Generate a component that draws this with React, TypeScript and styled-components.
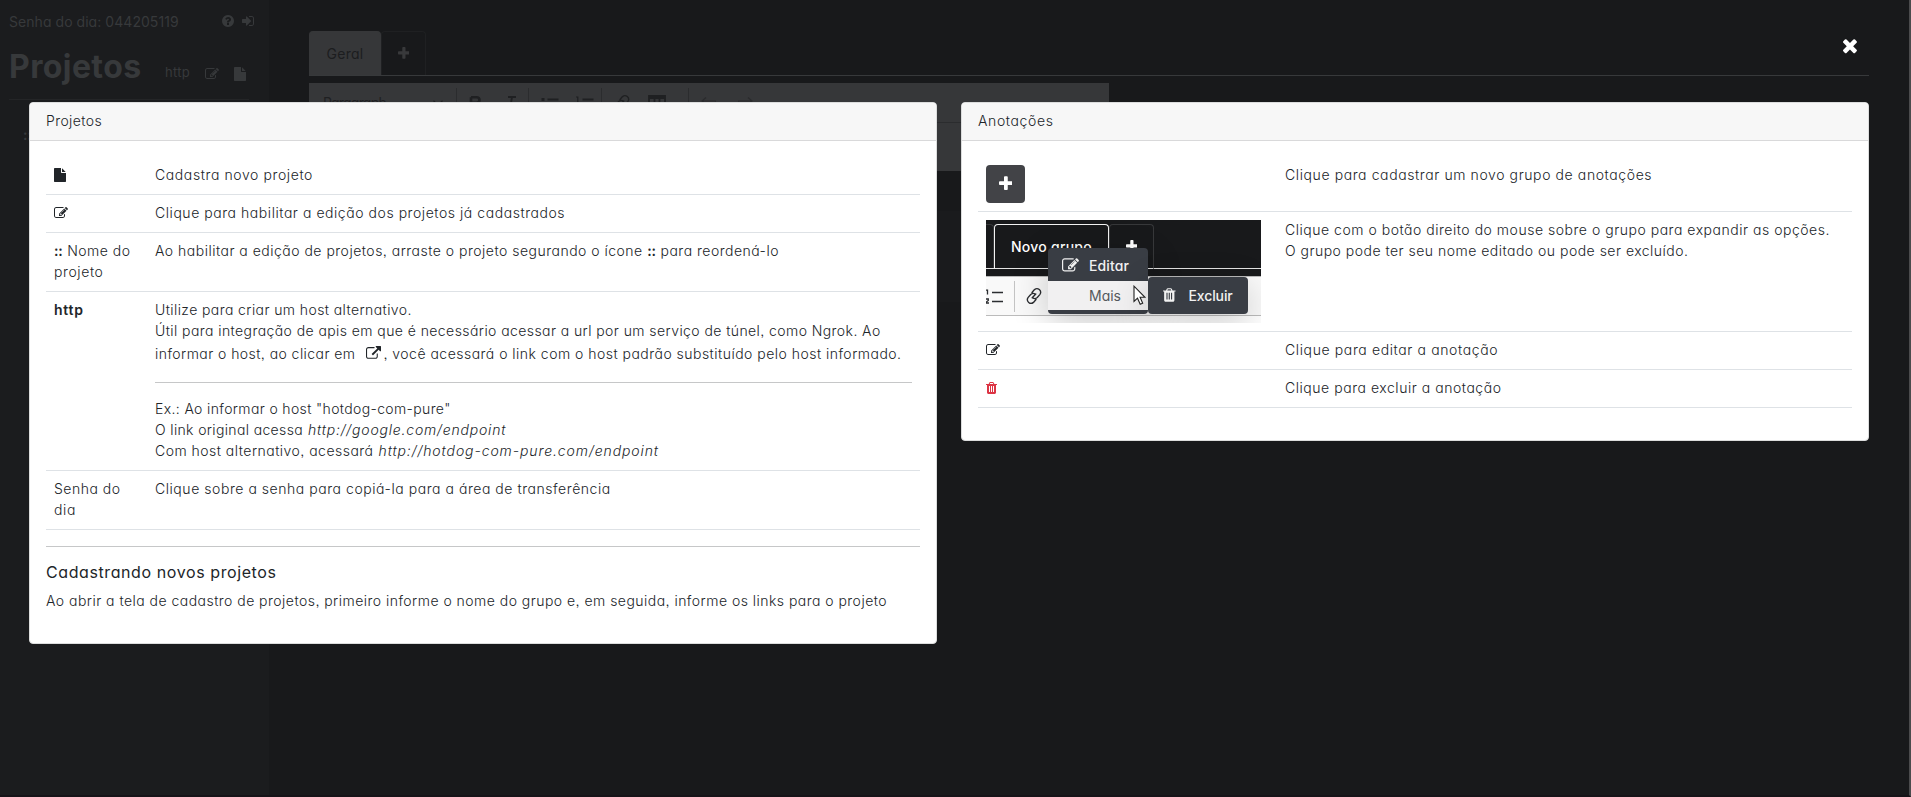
import React from 'react';
import styled, { createGlobalStyle } from 'styled-components';

const GlobalStyle = createGlobalStyle`
  *, *::before, *::after { box-sizing: border-box; }
  body {
    margin: 0;
    background: #18191b;
    color: #212529;
    font: 300 14px/21px Inter, "Liberation Sans", sans-serif;
    font-feature-settings: "cv11", "ss03";
  }
  svg { display: block; flex: none; }
`;

/* ---------- icons ---------- */

const paths = {
  edit: 'M888 1184l116-116-152-152-116 116v56h96v96h56zm440-720q-16-16-33 1l-350 350q-17 17-1 33t33-1l350-350q17-17 1-33zm80 594v190q0 119-84.5 203.5t-203.5 84.5h-832q-119 0-203.5-84.5t-84.5-203.5v-832q0-119 84.5-203.5t203.5-84.5h832q63 0 117 25 15 7 18 23 3 17-9 29l-49 49q-14 14-32 8-23-6-45-6h-832q-66 0-113 47t-47 113v832q0 66 47 113t113 47h832q66 0 113-47t47-113v-126q0-13 9-22l64-64q15-15 35-7t20 29zm-96-738l288 288-672 672h-288v-288zm444 132l-92 92-288-288 92-92q28-28 68-28t68 28l152 152q28 28 28 68t-28 68z',
  file: 'M1152 512v-472q22 14 36 28l408 408q14 14 28 36h-472zm-128 32q0 40 28 68t68 28h544v1056q0 40-28 68t-68 28h-1344q-40 0-68-28t-28-68v-1600q0-40 28-68t68-28h800v544z',
  trash: 'M704 1376v-704q0-14-9-23t-23-9h-64q-14 0-23 9t-9 23v704q0 14 9 23t23 9h64q14 0 23-9t9-23zm256 0v-704q0-14-9-23t-23-9h-64q-14 0-23 9t-9 23v704q0 14 9 23t23 9h64q14 0 23-9t9-23zm256 0v-704q0-14-9-23t-23-9h-64q-14 0-23 9t-9 23v704q0 14 9 23t23 9h64q14 0 23-9t9-23zm-544-992h448l-48-117q-7-9-17-11h-317q-10 2-17 11zm928 32v64q0 14-9 23t-23 9h-96v948q0 83-47 143.5t-113 60.5h-832q-66 0-113-58.5t-47-141.5v-952h-96q-14 0-23-9t-9-23v-64q0-14 9-23t23-9h309l70-167q15-37 54-63t79-26h320q40 0 79 26t54 63l70 167h309q14 0 23 9t9 23z',
  plus: 'M1600 736v192q0 40-28 68t-68 28h-416v416q0 40-28 68t-68 28h-192q-40 0-68-28t-28-68v-416h-416q-40 0-68-28t-28-68v-192q0-40 28-68t68-28h416v-416q0-40 28-68t68-28h192q40 0 68 28t28 68v416h416q40 0 68 28t28 68z',
  times: 'M1490 1322q0 40-28 68l-136 136q-28 28-68 28t-68-28l-294-294-294 294q-28 28-68 28t-68-28l-136-136q-28-28-28-68t28-68l294-294-294-294q-28-28-28-68t28-68l136-136q28-28 68-28t68 28l294 294 294-294q28-28 68-28t68 28l136 136q28 28 28 68t-28 68l-294 294 294 294q28 28 28 68z',
  question: 'M1024 1376v-192q0-14-9-23t-23-9h-192q-14 0-23 9t-9 23v192q0 14 9 23t23 9h192q14 0 23-9t9-23zm256-672q0-88-55.5-163t-138.5-116-170-41q-243 0-371 213-15 24 8 42l132 100q7 6 19 6 16 0 25-12 53-68 86-92 34-24 86-24 48 0 85.5 26t37.5 59q0 38-20 61t-68 45q-63 28-115.5 86.5t-52.5 125.5v36q0 14 9 23t23 9h192q14 0 23-9t9-23q0-19 21.5-49.5t54.5-49.5q32-18 49-28.5t46-35 44.5-48 28-60.5 12.5-81zm384 192q0 209-103 385.5t-279.5 279.5-385.5 103-385.5-103-279.5-279.5-103-385.5 103-385.5 279.5-279.5 385.5-103 385.5 103 279.5 279.5 103 385.5z',
  signIn: 'M1312 896q0 26-19 45l-544 544q-19 19-45 19t-45-19-19-45v-288h-448q-26 0-45-19t-19-45v-384q0-26 19-45t45-19h448v-288q0-26 19-45t45-19 45 19l544 544q19 19 19 45zm352-352v704q0 119-84.5 203.5t-203.5 84.5h-320q-13 0-22.5-9.5t-9.5-22.5q0-4-1-20t-.5-26.5 3-23.5 10-19.5 20.5-6.5h320q66 0 113-47t47-113v-704q0-66-47-113t-113-47h-312l-11.5-1-11.5-3-8-5.5-7-9-2-13.5q0-4-1-20t-.5-26.5 3-23.5 10-19.5 20.5-6.5h320q119 0 203.5 84.5t84.5 203.5z',
  external: 'M1408 928v320q0 119-84.5 203.5t-203.5 84.5h-832q-119 0-203.5-84.5t-84.5-203.5v-832q0-119 84.5-203.5t203.5-84.5h704q14 0 23 9t9 23v64q0 14-9 23t-23 9h-704q-66 0-113 47t-47 113v832q0 66 47 113t113 47h832q66 0 113-47t47-113v-320q0-14 9-23t23-9h64q14 0 23 9t9 23zm384-864v512q0 26-19 45t-45 19-45-19l-176-176-652 652q-10 10-23 10t-23-10l-114-114q-10-10-10-23t10-23l652-652-176-176q-19-19-19-45t19-45 45-19h512q26 0 45 19t19 45z',
};

/* horizontal extent [x, width] of each glyph in a 1792 unit em */
const extents: Record<keyof typeof paths, [number, number]> = {
  edit: [0, 1792],
  file: [128, 1536],
  trash: [192, 1408],
  plus: [192, 1408],
  times: [302, 1188],
  question: [128, 1536],
  signIn: [128, 1536],
  external: [0, 1792],
};

function Icon({ name, size = 14 }: { name: keyof typeof paths; size?: number }) {
  const [x, w] = extents[name];
  return (
    <svg width={(size * w) / 1792} height={size} viewBox={`${x} 0 ${w} 1792`} fill="currentColor">
      <path d={paths[name]} />
    </svg>
  );
}

/* ---------- text ---------- */

const Text = styled.span<{ $ls?: number }>`
  white-space: pre;
  letter-spacing: ${p => p.$ls ?? 0.48}px;
`;
const Line = styled(Text)`
  display: block;
`;
const Strong = styled(Text)`
  font-weight: 600;
`;
const Url = styled.em<{ $ls: number }>`
  margin-left: 5px;
  letter-spacing: ${p => p.$ls}px;
`;

/* ---------- dimmed page ---------- */

const Page = styled.div`
  position: relative;
  display: flex;
  height: 797px;
  overflow: hidden;
  color: #37393b;
  border-right: 2px solid #4b4b4d;
  border-bottom: 2px solid #161318;
`;
const Sidebar = styled.aside`
  width: 269px;
  padding: 10px 20px 0 9px;
  background: #1b1c1e;
`;
const PasswordRow = styled.div`
  display: flex;
  align-items: center;
  justify-content: space-between;
  height: 22px;
  margin-right: -14px;
  font-weight: 400;
`;
const IconPair = styled.div`
  display: flex;
  gap: 8px;
  margin-right: 9px;
`;
const SidebarTitle = styled.div`
  display: flex;
  height: 68px;
  align-items: flex-end;
  border-bottom: 1px solid #242527;
  padding-bottom: 17px;
`;
const Title = styled.h1`
  margin: 0 23px -1px 0;
  width: 133px;
  font-size: 32px;
  line-height: 32px;
  font-weight: 700;
  letter-spacing: 0.4px;
`;
const SmallLabel = styled.span`
  width: 26px;
  margin-right: 14px;
  font-size: 13px;
  line-height: 19px;
  font-weight: 400;
  letter-spacing: 0.28px;
`;
const TitleIcons = styled.div`
  display: flex;
  align-items: flex-end;
  gap: 15px;
  padding-bottom: 1px;
`;
const DragHandle = styled.div`
  margin: 24px 0 0 14px;
  font-weight: 600;
`;
const Main = styled.main`
  flex: 1;
  padding: 31px 40px 0 40px;
`;
const Tabs = styled.div`
  display: flex;
  height: 45px;
  border-bottom: 1px solid #37393b;
`;
const Tab = styled.div<{ $active?: boolean }>`
  display: flex;
  align-items: center;
  justify-content: center;
  width: ${p => (p.$active ? 72 : 45)}px;
  height: 44px;
  border: 1px solid ${p => (p.$active ? '#363739' : '#1f2022')};
  border-bottom: 0;
  border-radius: 4px 4px 0 0;
  padding-bottom: 1px;
  background: ${p => (p.$active ? '#363739' : 'transparent')};
  color: ${p => (p.$active ? '#1c1d1f' : '#38393b')};
  font-weight: 400;
`;
const Editor = styled.div`
  width: 800px;
  height: 88px;
  margin-top: 7px;
  background: #363739;
  color: #1f2022;
`;
const Toolbar = styled.div`
  display: flex;
  align-items: center;
  height: 40px;
  padding-left: 14px;
  border-bottom: 1px solid #2b2c2e;
  font-weight: 400;
`;
const ToolGroup = styled.div<{ $w: number; $gap?: number; $muted?: boolean }>`
  display: flex;
  align-items: center;
  width: ${p => p.$w}px;
  height: 29px;
  padding-left: 12px;
  gap: ${p => p.$gap ?? 18}px;
  border-left: 1px solid #2b2c2e;
  color: ${p => (p.$muted ? '#2a2b2d' : 'inherit')};
`;
const BlockFormat = styled.div`
  display: flex;
  align-items: center;
  justify-content: space-between;
  width: 133px;
  padding-right: 13px;
`;
const NoteFooter = styled.div`
  width: 800px;
  height: 91px;
  margin-top: 40px;
  background: #1a1b1d;
`;

const stroke = { fill: 'none', stroke: 'currentColor', strokeWidth: 1.8 } as const;

const Chevron = () => (
  <svg width="10" height="6" viewBox="0 0 10 6" {...stroke} strokeWidth={1.2}><path d="M.5.8 5 5 9.5.8" /></svg>
);
const ListIcon = ({ numbered }: { numbered?: boolean }) => (
  <svg width="18" height="14" viewBox="0 0 18 14" {...stroke}>
    <path d="M6.500 3.500H17.500M6.500 12H17.500" />
    {numbered ? (
      <path d="M0 1H1.800V6M0 9.200H2.800V11L.3 12.600V13.600H3.200" strokeWidth={1.200} />
    ) : (
      <path d="M.5 3.500H3.500M.5 12H3.500" strokeWidth={3} />
    )}
  </svg>
);
const LinkIcon = () => (
  <svg width="16" height="18" viewBox="0 0 16 18" {...stroke} strokeWidth={1.35} strokeLinecap="round">
    <path d="M6 5.500 8.500 2.600Q11 .6 13.300 2.600 15.800 5 13.800 7.600L11.300 10.500Q9 12.200 7.200 11.200M10 12.500 7.500 15.400Q5 17.400 2.700 15.400.2 13 2.200 10.400L4.700 7.500Q7 5.800 8.800 6.800M6.200 10.800 9.800 7" />
  </svg>
);

function DimmedPage() {
  return (
    <>
      <Sidebar>
        <PasswordRow>
          <Text $ls={0.05}>Senha do dia: 044205119</Text>
          <IconPair><Icon name="question" /><Icon name="signIn" /></IconPair>
        </PasswordRow>
        <SidebarTitle>
          <Title>Projetos</Title>
          <SmallLabel>http</SmallLabel>
          <TitleIcons><Icon name="edit" /><Icon name="file" /></TitleIcons>
        </SidebarTitle>
        <DragHandle>::</DragHandle>
      </Sidebar>
      <Main>
        <Tabs>
          <Tab $active><Text $ls={0.28}>Geral</Text></Tab>
          <Tab><Icon name="plus" size={15} /></Tab>
        </Tabs>
        <Editor>
          <Toolbar>
            <BlockFormat><Text $ls={-0.8}>Paragraph</Text><Chevron /></BlockFormat>
            <ToolGroup $w={72} $gap={24}>
              <svg width="13" height="14" viewBox="0 0 13 14" {...stroke} strokeWidth={2.600}><path d="M2 1.300H7.500Q10.500 1.300 10.500 4T7.500 6.800H2M2 6.800H8.500Q11.500 6.800 11.500 9.700T8.500 12.700H2V1.300" /></svg>
              <svg width="10" height="14" viewBox="0 0 10 14" {...stroke}><path d="M2 1H10M0 13H7M6 1 4 13" /></svg>
            </ToolGroup>
            <ToolGroup $w={73} $gap={17}><ListIcon /><ListIcon numbered /></ToolGroup>
            <ToolGroup $w={87}>
              <LinkIcon />
              <svg width="18" height="15" viewBox="0 0 18 15" {...stroke}><path d="M1 1H17V14H1ZM1 3H17M6.500 3V14M11.500 3V14M1 8.500H17" /></svg>
            </ToolGroup>
            <ToolGroup $w={120} $gap={22} $muted>
              <svg width="15" height="12" viewBox="0 0 15 12" {...stroke} strokeWidth={1.2}><path d="M5 .5 1 4 5 7.500M1 4H14.500V10" /></svg>
              <svg width="15" height="12" viewBox="0 0 15 12" {...stroke} strokeWidth={1.2}><path d="M10 .5 14 4 10 7.500M14 4H.5V10" /></svg>
            </ToolGroup>
          </Toolbar>
        </Editor>
        <NoteFooter />
      </Main>
    </>
  );
}

/* ---------- help overlay ---------- */

const Overlay = styled.div`
  position: absolute;
  inset: 0 -2px 0 0;
  display: flex;
  align-items: flex-start;
  gap: 24px;
  padding: 102px 42px 0 29px;
  color: #212529;
`;
const CloseButton = styled.button`
  position: absolute;
  top: 35px;
  right: 54px;
  padding: 0;
  border: 0;
  background: none;
  color: #fff;
`;
const Card = styled.section`
  flex: 1;
  min-width: 0;
  border: 1px solid #dcdddd;
  border-radius: 4px;
  background: #fff;
`;
const CardHeader = styled.header`
  height: 38px;
  padding: 7px 16px;
  border-bottom: 1px solid #d9d9da;
  border-radius: 3px 3px 0 0;
  background: #f7f7f7;
`;
const CardBody = styled.div`
  padding: 16px;
`;
const Rows = styled.div<{ $first: number }>`
  display: grid;
  grid-template-columns: ${p => p.$first}px 1fr;
  margin-bottom: 16px;
`;
const Cell = styled.div`
  min-width: 0;
  padding: 7px 8px 9px;
  border-bottom: 1px solid #dee2e6;
`;
const MediaCell = styled(Cell)`
  padding: 8px;
`;
const IconSlot = styled.div<{ $color?: string }>`
  padding-top: 4px;
  height: 21px;
  color: ${p => p.$color ?? 'inherit'};
`;
const Rule = styled.hr<{ $inCell?: boolean }>`
  height: 1px;
  margin: ${p => (p.$inCell ? '17px 0 15px' : '16px 0')};
  border: 0;
  background: #c6c7c8;
`;
const IconLine = styled.div`
  display: flex;
  align-items: center;
  height: 24px;
`;
const InlineIcon = styled.span`
  margin: 0 3px 0 10px;
`;
const SubHeading = styled.h5`
  margin: 0 0 8px;
  font-size: 16px;
  line-height: 19.2px;
  font-weight: 400;
  letter-spacing: 0.593px;
`;
const Paragraph = styled.p`
  margin: 0 0 16px;
  white-space: nowrap;
  letter-spacing: 0.47px;
`;
const AddButton = styled.button`
  display: flex;
  align-items: center;
  justify-content: center;
  width: 39px;
  height: 38px;
  padding: 0;
  border: 0;
  border-radius: 4px;
  background: #424347;
  color: #fff;
`;

/* ---------- group menu illustration ---------- */

const Demo = styled.div`
  position: relative;
  width: 275px;
  height: 103px;
  overflow: hidden;
  background: #fff;
  font-weight: 500;
`;
const DemoTabs = styled.div`
  display: flex;
  height: 56px;
  padding-top: 4px;
  background: linear-gradient(#18191b 48px, #e4e4e4 48px, #e4e4e4 49px, #18191b 49px);
  color: #fff;
`;
const DemoTab = styled.div<{ $w: number; $active?: boolean }>`
  display: flex;
  align-items: center;
  justify-content: center;
  width: ${p => p.$w}px;
  height: 45px;
  padding-bottom: 1px;
  border: 1px solid ${p => (p.$active ? '#f2f2f2' : '#37383a')};
  border-bottom-color: #e4e4e4;
  border-radius: 4px 4px 0 0;
`;
const DemoPrevTab = styled.div`
  width: 8px;
  height: 44px;
  border: 1px solid #37383a;
  border-width: 1px 1px 0 0;
  border-radius: 0 4px 0 0;
`;
const DemoToolbar = styled.div`
  display: flex;
  align-items: center;
  height: 40px;
  border: 1px solid #bbb;
  border-width: 1px 0;
  background: #f9f9f9;
  color: #2b2d30;
`;
const DemoList = styled.div`
  width: 29px;
  height: 31px;
  padding-top: 8px;
  border-right: 1px solid #c4c4c4;
  margin-right: 11px;
`;
const Menu = styled.div`
  position: absolute;
  top: 28px;
  left: 62px;
  width: 100px;
  height: 66px;
  border-radius: 4px;
  background: #393d44;
  color: #f1f1f1;
  box-shadow: 0 10px 36px rgba(0, 0, 0, 0.2);
`;
const MenuItem = styled.div<{ $hover?: boolean }>`
  display: flex;
  align-items: center;
  gap: 10px;
  height: ${p => (p.$hover ? 29 : 33)}px;
  padding-top: ${p => (p.$hover ? 0 : 2)}px;
  padding-bottom: ${p => (p.$hover ? 1 : 0)}px;
  padding-left: ${p => (p.$hover ? 41 : 14)}px;
  background: ${p => (p.$hover ? '#f1f0f1' : 'transparent')};
  color: ${p => (p.$hover ? '#55585d' : '#f1f1f1')};
  font-weight: ${p => (p.$hover ? 400 : 500)};
`;
const SubMenu = styled(Menu)`
  top: 57px;
  left: 162px;
  height: 37px;
  display: flex;
  align-items: center;
  gap: 13px;
  padding: 0 0 1px 15px;
`;
const Cursor = styled.svg`
  position: absolute;
  top: 65px;
  left: 147px;
`;

function GroupMenuDemo() {
  return (
    <Demo>
      <DemoTabs>
        <DemoPrevTab />
        <DemoTab $w={115} $active><Text $ls={0.26}>Novo grupo</Text></DemoTab>
        <DemoTab $w={45}><Icon name="plus" size={15} /></DemoTab>
      </DemoTabs>
      <DemoToolbar>
        <DemoList>
          <svg width="18" height="15" viewBox="0 0 18 15" fill="none" stroke="currentColor">
            <path d="M6 3.500H17M6 12.500H17" strokeWidth={1.600} />
            <path d="M0 1.200H1.500V5.500M0 10H2.300V11.500L.3 13V14H3" strokeWidth={1.300} />
          </svg>
        </DemoList>
        <LinkIcon />
      </DemoToolbar>
      <Menu>
        <MenuItem><Icon name="edit" size={17} /><Text $ls={0.1}>Editar</Text></MenuItem>
        <MenuItem $hover><Text $ls={0}>Mais</Text></MenuItem>
      </Menu>
      <SubMenu><Icon name="trash" size={16} /><Text $ls={-0.13}>Excluir</Text></SubMenu>
      <Cursor width="13" height="21" viewBox="0 0 13 21" fill="#fff" stroke="#222" strokeWidth={1.1}>
        <path d="M1 1.200V16.500L4.500 13.200 7.200 19.300 9.700 18.200 7.100 12.300H12Z" />
      </Cursor>
    </Demo>
  );
}

export default function App() {
  return (
    <>
      <GlobalStyle />
      <Page>
        <DimmedPage />
        <Overlay>
          <CloseButton><Icon name="times" size={21} /></CloseButton>
          <Card>
            <CardHeader><Text $ls={0.4}>Projetos</Text></CardHeader>
            <CardBody>
              <Rows $first={101}>
                <Cell><IconSlot><Icon name="file" /></IconSlot></Cell>
                <Cell><Line $ls={0.6}>Cadastra novo projeto</Line></Cell>

                <Cell><IconSlot><Icon name="edit" /></IconSlot></Cell>
                <Cell><Line $ls={0.55}>Clique para habilitar a edição dos projetos já cadastrados</Line></Cell>

                <Cell>
                  <Line $ls={0.48}><Strong $ls={-0.1}>::</Strong> Nome do</Line>
                  <Line $ls={0.6}>projeto</Line>
                </Cell>
                <Cell>
                  <Line $ls={0.492}>Ao habilitar a edição de projetos, arraste o projeto segurando o ícone <Strong $ls={0}>::</Strong> para reordená-lo</Line>
                </Cell>

                <Cell><Strong $ls={0.75}>http</Strong></Cell>
                <Cell>
                  <Line $ls={0.41}>Utilize para criar um host alternativo.</Line>
                  <Line $ls={0.422}>Útil para integração de apis em que é necessário acessar a url por um serviço de túnel, como Ngrok. Ao</Line>
                  <IconLine>
                    <Text $ls={0.44}>informar o host, ao clicar em</Text>
                    <InlineIcon><Icon name="external" size={15} /></InlineIcon>
                    <Text $ls={0.478}>, você acessará o link com o host padrão substituído pelo host informado.</Text>
                  </IconLine>
                  <Rule $inCell />
                  <Line $ls={0.36}>Ex.: Ao informar o host "hotdog-com-pure"</Line>
                  <Line $ls={0.353}>O link original acessa<Url $ls={0.8}>http://google.com/endpoint</Url></Line>
                  <Line $ls={0.479}>Com host alternativo, acessará<Url $ls={0.9}>http://hotdog-com-pure.com/endpoint</Url></Line>
                </Cell>

                <Cell>
                  <Line $ls={0.5}>Senha do</Line>
                  <Line $ls={0.6}>dia</Line>
                </Cell>
                <Cell><Line $ls={0.548}>Clique sobre a senha para copiá-la para a área de transferência</Line></Cell>
              </Rows>
              <Rule />
              <SubHeading>Cadastrando novos projetos</SubHeading>
              <Paragraph>
                Ao abrir a tela de cadastro de projetos, primeiro informe o nome do grupo e, em seguida, informe os links para o projeto
              </Paragraph>
            </CardBody>
          </Card>
          <Card>
            <CardHeader><Text $ls={0.62}>Anotações</Text></CardHeader>
            <CardBody>
              <Rows $first={299}>
                <MediaCell><AddButton><Icon name="plus" size={17.5} /></AddButton></MediaCell>
                <Cell><Line $ls={0.6}>Clique para cadastrar um novo grupo de anotações</Line></Cell>

                <MediaCell><GroupMenuDemo /></MediaCell>
                <Cell>
                  <Line $ls={0.52}>Clique com o botão direito do mouse sobre o grupo para expandir as opções.</Line>
                  <Line $ls={0.485}>O grupo pode ter seu nome editado ou pode ser excluído.</Line>
                </Cell>

                <Cell><IconSlot><Icon name="edit" /></IconSlot></Cell>
                <Cell><Line $ls={0.62}>Clique para editar a anotação</Line></Cell>

                <Cell><IconSlot $color="#dc3545"><Icon name="trash" /></IconSlot></Cell>
                <Cell><Line $ls={0.54}>Clique para excluir a anotação</Line></Cell>
              </Rows>
            </CardBody>
          </Card>
        </Overlay>
      </Page>
    </>
  );
}
